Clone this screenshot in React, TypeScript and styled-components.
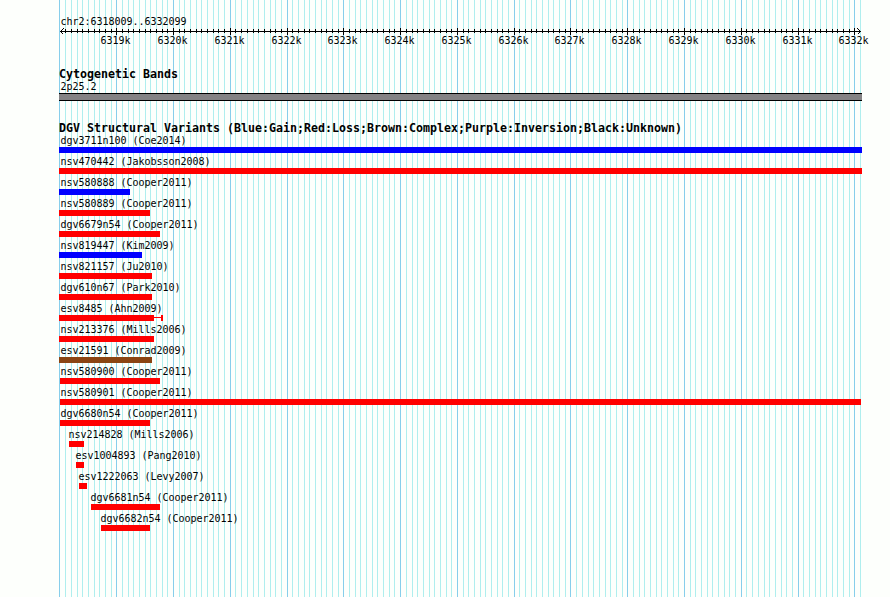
import styled, { createGlobalStyle } from 'styled-components';

const GlobalStyle = createGlobalStyle`
    body {
        margin: 0;
        background: #fdfffc;
    }
`;

interface IVariant {
    name: string;
    start: number;
    end: number;
    color: string;
    tail?: number;
}

const LEFT = 59;
const MINOR_STEP = 5.6778;
const lineX = (index: number) => Math.floor(59.98 + index * MINOR_STEP);
const lines = Array.from({ length: 142 }, (_, index) => ({ index, x: lineX(index), major: index % 10 === 0 }));

const variants: Array<IVariant> = [
    { name: 'dgv3711n100 (Coe2014)', start: 59, end: 862, color: 'blue' },
    { name: 'nsv470442 (Jakobsson2008)', start: 59, end: 862, color: 'red' },
    { name: 'nsv580888 (Cooper2011)', start: 59, end: 130, color: 'blue' },
    { name: 'nsv580889 (Cooper2011)', start: 59, end: 150, color: 'red' },
    { name: 'dgv6679n54 (Cooper2011)', start: 59, end: 160, color: 'red' },
    { name: 'nsv819447 (Kim2009)', start: 59, end: 142, color: 'blue' },
    { name: 'nsv821157 (Ju2010)', start: 59, end: 152, color: 'red' },
    { name: 'dgv610n67 (Park2010)', start: 59, end: 152, color: 'red' },
    { name: 'esv8485 (Ahn2009)', start: 59, end: 154, color: 'red', tail: 9 },
    { name: 'nsv213376 (Mills2006)', start: 59, end: 154, color: 'red' },
    { name: 'esv21591 (Conrad2009)', start: 59, end: 152, color: '#8b4513' },
    { name: 'nsv580900 (Cooper2011)', start: 60, end: 160, color: 'red' },
    { name: 'nsv580901 (Cooper2011)', start: 60, end: 861, color: 'red' },
    { name: 'dgv6680n54 (Cooper2011)', start: 60, end: 150, color: 'red' },
    { name: 'nsv214828 (Mills2006)', start: 69, end: 84, color: 'red' },
    { name: 'esv1004893 (Pang2010)', start: 76, end: 84, color: 'red' },
    { name: 'esv1222063 (Levy2007)', start: 79, end: 87, color: 'red' },
    { name: 'dgv6681n54 (Cooper2011)', start: 91, end: 160, color: 'red' },
    { name: 'dgv6682n54 (Cooper2011)', start: 101, end: 150, color: 'red' },
];

const Browser = styled.main`
    position: relative;
    box-sizing: border-box;
    width: 890px;
    height: 597px;
    padding-top: 16px;
    overflow: hidden;
    color: black;
    font-family: 'DejaVu Sans Mono', monospace;
    font-size: 10px;
    letter-spacing: -0.02px;
`;

const Grid = styled.svg`
    position: absolute;
    inset: 0;
    z-index: -1;
`;

const Label = styled.div<{ $indent: number }>`
    height: 12px;
    line-height: 12px;
    margin-left: ${({ $indent }) => $indent}px;
    white-space: pre;
`;

const Ruler = styled.svg`
    display: block;
    font-size: 10px;
`;

const Track = styled.section<{ $gap: number }>`
    margin-top: ${({ $gap }) => $gap}px;
`;

const TrackTitle = styled.h2`
    height: 13px;
    margin: 0 0 0 59px;
    font-size: 11.63px;
    font-weight: bold;
    line-height: 13px;
    letter-spacing: 0;
    white-space: pre;
`;

const Band = styled.div`
    box-sizing: border-box;
    width: 803px;
    height: 8px;
    margin-left: ${LEFT}px;
    border: solid black;
    border-width: 1px 0;
    background: #848284;
`;

const VariantRow = styled.div`
    height: 21px;
`;

const Glyph = styled.div<{ $start: number }>`
    display: flex;
    height: 6px;
    margin-left: ${({ $start }) => $start}px;
`;

const Bar = styled.div<{ $width: number; $color: string }>`
    width: ${({ $width }) => $width}px;
    background: ${({ $color }) => $color};
`;

const Connector = styled.div<{ $width: number; $color: string }>`
    width: ${({ $width }) => $width}px;
    height: 1px;
    margin-top: 2px;
    background: ${({ $color }) => $color};
`;

const GridLines = () => (
    <Grid width="890" height="597" shapeRendering="crispEdges">
        {lines.map(({ index, x, major }) => (
            <rect key={index} x={x} y="0" width="1" height="597" fill={major ? '#87ceeb' : '#afeeee'} />
        ))}
    </Grid>
);

const Scale = () => (
    <Ruler width="890" height="20">
        <g shapeRendering="crispEdges">
            <rect x="60" y="3" width="801" height="1" />
            {lines.slice(1, -1).map(({ index, x, major }) => (
                <rect key={index} x={x} y={major ? 0 : 1} width="1" height={major ? 7 : 4} />
            ))}
            <path d="M63.5 0.5l-3 3 3 3M857.5 0.5l3 3-3 3" fill="none" stroke="black" />
        </g>
        {lines.filter(({ index, major }) => major && index > 0).map(({ index, x }) => (
            <text key={index} x={x - 15.6} y="16">{6318 + index / 10}k</text>
        ))}
    </Ruler>
);

const Variant = ({ name, start, end, color, tail }: IVariant) => (
    <VariantRow>
        <Label $indent={Math.max(start - 0.5, 60.5)}>{name}</Label>
        <Glyph $start={start}>
            <Bar $width={end - start} $color={color} />
            {tail ? (
                <>
                    <Connector $width={tail - 2} $color={color} />
                    <Bar $width={2} $color={color} />
                </>
            ) : null}
        </Glyph>
    </VariantRow>
);

export default function App() {
    return (
        <>
            <GlobalStyle />
            <Browser>
                <GridLines />
                <Label $indent={60.5}>chr2:6318009..6332099</Label>
                <Scale />
                <Track $gap={20}>
                    <TrackTitle>Cytogenetic Bands</TrackTitle>
                    <Label $indent={60.5}>2p25.2</Label>
                    <Band />
                </Track>
                <Track $gap={21}>
                    <TrackTitle>DGV Structural Variants (Blue:Gain;Red:Loss;Brown:Complex;Purple:Inversion;Black:Unknown)</TrackTitle>
                    {variants.map((variant) => (
                        <Variant key={variant.name} {...variant} />
                    ))}
                </Track>
            </Browser>
        </>
    );
}
